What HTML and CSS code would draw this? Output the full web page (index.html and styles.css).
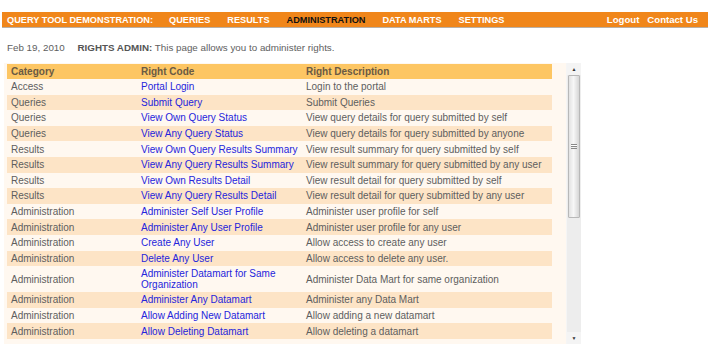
FILE: index.html
```html
<!DOCTYPE html>
<html lang="en">
<head>
    <meta charset="UTF-8">
    <title>Query Tool - Rights Admin</title>
    <link rel="stylesheet" href="styles.css">
</head>
<body>
    <!-- top menu -->
    <div class="menu-bar">
        <span class="menu-title">QUERY TOOL DEMONSTRATION:</span>
        <a href="#" class="menu-item">QUERIES</a>
        <a href="#" class="menu-item">RESULTS</a>
        <a href="#" class="menu-item active">ADMINISTRATION</a>
        <a href="#" class="menu-item">DATA MARTS</a>
        <a href="#" class="menu-item">SETTINGS</a>
        <span class="menu-right">
            <a href="#">Logout</a>
            <a href="#">Contact Us</a>
        </span>
    </div>

    <div class="page-info">
        <span class="page-date">Feb 19, 2010</span>
        <strong>RIGHTS ADMIN:</strong> This page allows you to administer rights.
    </div>

    <!-- rights list -->
    <div class="list-pane">
        <div class="list-body">
            <table class="rights-table">
                <thead>
                    <tr>
                        <th class="col-cat">Category</th>
                        <th class="col-code">Right Code</th>
                        <th>Right Description</th>
                    </tr>
                </thead>
                <tbody>
                    <tr><td>Access</td><td><a href="#">Portal Login</a></td><td>Login to the portal</td></tr>
                    <tr><td>Queries</td><td><a href="#">Submit Query</a></td><td>Submit Queries</td></tr>
                    <tr><td>Queries</td><td><a href="#">View Own Query Status</a></td><td>View query details for query submitted by self</td></tr>
                    <tr><td>Queries</td><td><a href="#">View Any Query Status</a></td><td>View query details for query submitted by anyone</td></tr>
                    <tr><td>Results</td><td><a href="#">View Own Query Results Summary</a></td><td>View result summary for query submitted by self</td></tr>
                    <tr><td>Results</td><td><a href="#">View Any Query Results Summary</a></td><td>View result summary for query submitted by any user</td></tr>
                    <tr><td>Results</td><td><a href="#">View Own Results Detail</a></td><td>View result detail for query submitted by self</td></tr>
                    <tr><td>Results</td><td><a href="#">View Any Query Results Detail</a></td><td>View result detail for query submitted by any user</td></tr>
                    <tr><td>Administration</td><td><a href="#">Administer Self User Profile</a></td><td>Administer user profile for self</td></tr>
                    <tr><td>Administration</td><td><a href="#">Administer Any User Profile</a></td><td>Administer user profile for any user</td></tr>
                    <tr><td>Administration</td><td><a href="#">Create Any User</a></td><td>Allow access to create any user</td></tr>
                    <tr><td>Administration</td><td><a href="#">Delete Any User</a></td><td>Allow access to delete any user.</td></tr>
                    <tr><td>Administration</td><td><a href="#">Administer Datamart for Same<br>Organization</a></td><td>Administer Data Mart for same organization</td></tr>
                    <tr><td>Administration</td><td><a href="#">Administer Any Datamart</a></td><td>Administer any Data Mart</td></tr>
                    <tr><td>Administration</td><td><a href="#">Allow Adding New Datamart</a></td><td>Allow adding a new datamart</td></tr>
                    <tr><td>Administration</td><td><a href="#">Allow Deleting Datamart</a></td><td>Allow deleting a datamart</td></tr>
                </tbody>
            </table>
        </div>
        <div class="scrollbar">
            <div class="scroll-btn">&#9650;</div>
            <div class="scroll-thumb"><span class="grip"></span></div>
            <div class="scroll-track"></div>
            <div class="scroll-btn">&#9660;</div>
        </div>
    </div>
</body>
</html>
```

FILE: styles.css
```css
body {
    margin: 0;
    font-family: "Liberation Sans", Arial, sans-serif;
    font-size: 10px;
    color: #5e5e5e;
    background: white;
    overflow: hidden;
}

a {
    text-decoration: none;
}

.menu-bar {
    margin: 12px 2px 0;
    height: 15px;
    background: #f0861a;
    border-bottom: 1px solid #b9b0a6;
    display: flex;
    align-items: center;
    padding: 0 10px 0 5px;
    font-size: 9.2px;
    font-weight: bold;
    color: white;
}

.menu-title {
    margin-right: 16px;
}

.menu-item {
    color: white;
    margin-right: 17px;
}

.menu-item.active {
    color: #111;
}

.menu-right {
    margin-left: auto;
    display: flex;
    gap: 8px;
    font-size: 9.6px;
}

.menu-right a {
    color: white;
}

.page-info {
    margin: 13px 0 0 7px;
    height: 13px;
    line-height: 13px;
    font-size: 9.8px;
}

.page-date {
    margin-right: 10px;
}

.page-info strong {
    color: #555;
}

.list-pane {
    margin: 9px 0 0 4px;
    width: 577px;
    height: 281px;
    display: flex;
    background: #fff8f0;
}

.list-body {
    flex: 1;
    overflow: hidden;
    padding: 1px 0 0 3px;
}

.rights-table {
    width: 545px;
    border-collapse: collapse;
}

.rights-table th,
.rights-table td {
    text-align: left;
    padding: 2px 4px;
    height: 11.6px;
    line-height: 11px;
    vertical-align: middle;
}

.rights-table th {
    background: #fdc663;
    color: #6a5a44;
    height: 11px;
}

.col-cat {
    width: 122px;
}

.col-code {
    width: 157px;
}

.rights-table tbody tr:nth-child(even) td {
    background: #fde4c6;
}

.rights-table td a {
    color: #2525dc;
}

.scrollbar {
    width: 14px;
    display: flex;
    flex-direction: column;
    background: #ededed;
    border-left: 1px solid #f5f5f5;
}

.scroll-btn {
    height: 12px;
    font-size: 5px;
    line-height: 12px;
    text-align: center;
    color: #333;
    background: #f4f4f4;
}

.scroll-thumb {
    height: 141px;
    margin: 0 1px;
    border: 1px solid #b8b8b8;
    border-radius: 1px;
    background: linear-gradient(to right, #e2e2e2, #f7f7f7 45%, #d6d6d6);
    display: flex;
    align-items: center;
    justify-content: center;
}

.grip {
    width: 6px;
    height: 5px;
    border-top: 1px solid #888;
    border-bottom: 1px solid #888;
    box-sizing: border-box;
    background: linear-gradient(#fff 0 1px, #888 1px 2px, transparent 2px);
}

.scroll-track {
    flex: 1;
}
```
